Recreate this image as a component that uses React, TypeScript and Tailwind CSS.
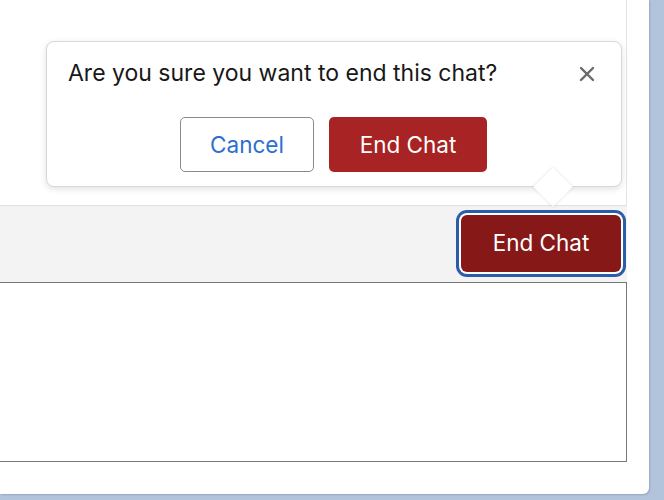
import { X } from "lucide-react";

export default function App() {
  return (
    <div
      className="relative w-[664px] h-[500px] bg-[#b2c3dc] overflow-hidden"
      style={{ fontFamily: "Inter, 'Liberation Sans', sans-serif" }}
    >
      {/* chat panel */}
      <div className="w-[649px] h-[494px] bg-white rounded-br-[6px] flex flex-col shadow-[1px_1px_2px_rgba(0,0,0,0.15)]">
        <div className="w-[627px] h-[205px] border-r border-[#e3e3e3]" />
        <div className="w-[627px] h-[77px] bg-[#f3f3f3] border-t border-[#e0e0e0] flex items-center justify-end pr-[6px] pb-[2px]">
          <button className="w-[160px] h-[57px] rounded-[6px] bg-[#861818] text-white text-[22.5px] ring-[3px] ring-[#2b5ca8] ring-offset-2 ring-offset-white">
            End Chat
          </button>
        </div>
        <div className="w-[628px] h-[180px] -ml-px border border-[#777]" />
      </div>

      {/* confirm popover */}
      <div className="absolute left-[46px] top-[41px] w-[576px] h-[146px] bg-white border border-[#d8d8d8] rounded-[8px] shadow-[0_2px_6px_rgba(0,0,0,0.12)] pl-[21px] pr-[22px] pt-[15px]">
        <div className="flex items-start justify-between">
          <p className="text-[23px] leading-[32px] text-[#181818]">
            Are you sure you want to end this chat?
          </p>
          <button className="mt-[5px] text-[#6b6b6b]">
            <X size={24} strokeWidth={2.4} />
          </button>
        </div>
        <div className="flex gap-[15px] pl-[112px] mt-[28px]">
          <button className="w-[134px] h-[55px] rounded-[5px] border border-[#8a8a8a] text-[#2b6fd0] text-[22.5px] bg-white">
            Cancel
          </button>
          <button className="w-[158px] h-[55px] rounded-[5px] bg-[#a82323] text-white text-[22.5px]">
            End Chat
          </button>
        </div>
        <div className="absolute left-[492px] top-[131px] w-[28px] h-[28px] bg-white rotate-45 shadow-[0_0_3px_rgba(0,0,0,0.14)]" />
      </div>
    </div>
  );
}
